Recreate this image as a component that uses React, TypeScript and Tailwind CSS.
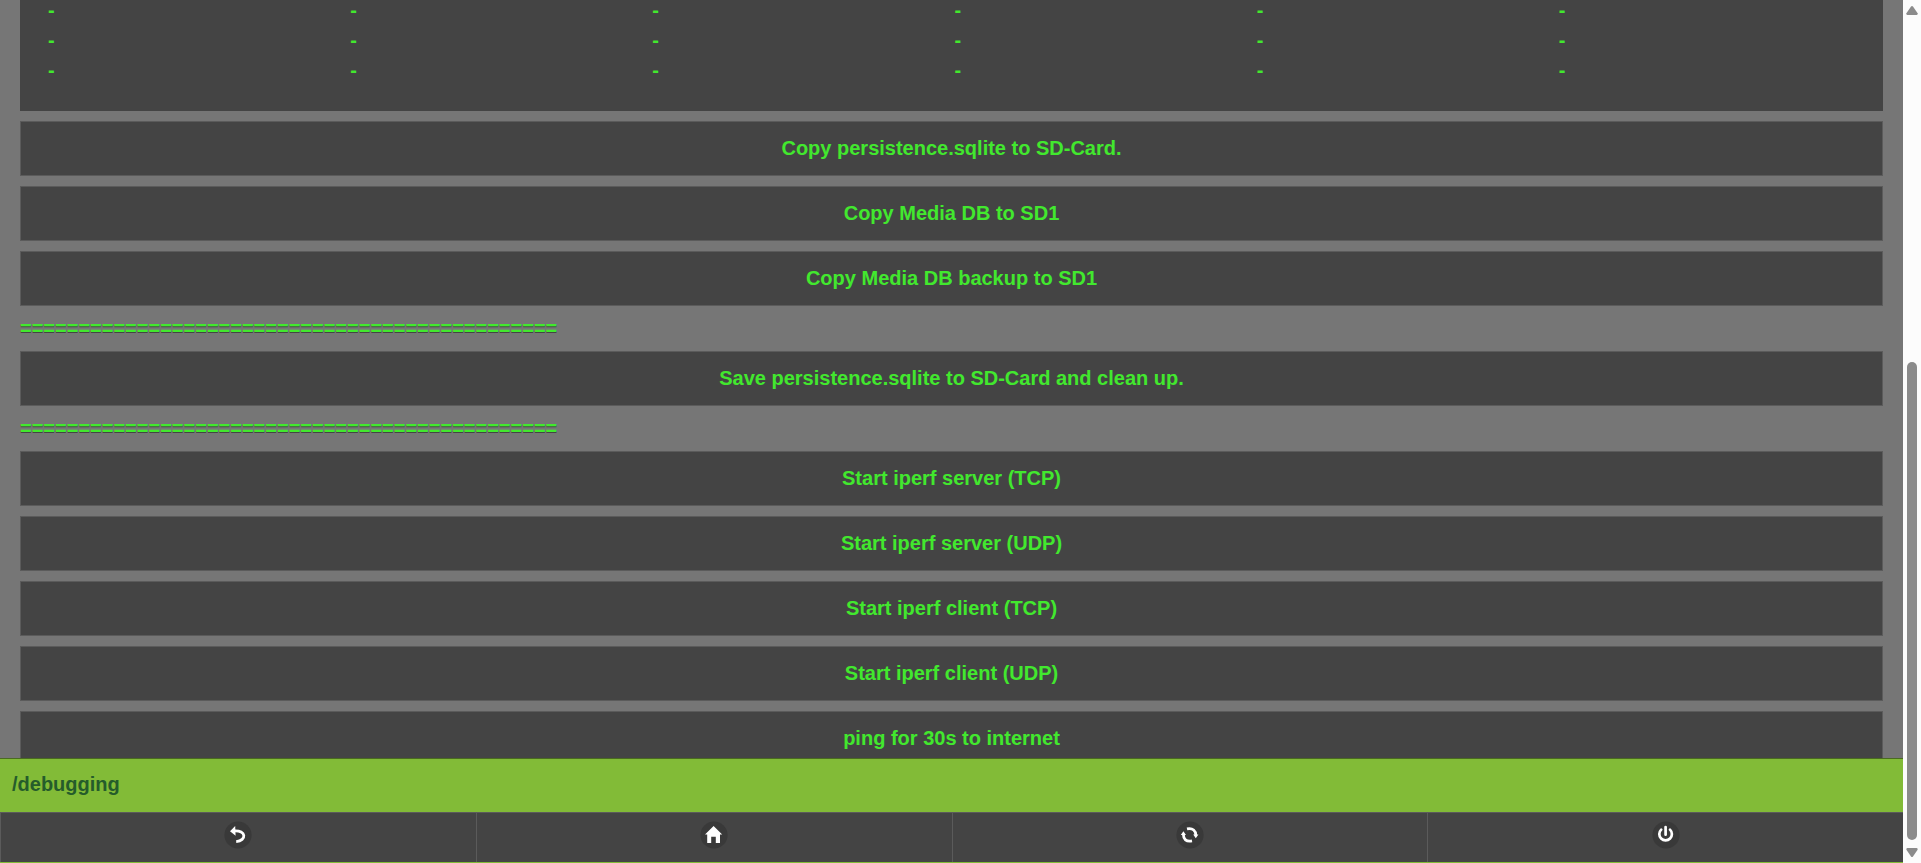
import type { ReactNode } from "react";

const deviceRows = [
  ["-", "-", "-", "-", "-", "-"],
  ["-", "-", "-", "-", "-", "-"],
  ["-", "-", "-", "-", "-", "-"],
];

const copyActions = [
  "Copy persistence.sqlite to SD-Card.",
  "Copy Media DB to SD1",
  "Copy Media DB backup to SD1",
];

const networkActions = [
  "Start iperf server (TCP)",
  "Start iperf server (UDP)",
  "Start iperf client (TCP)",
  "Start iperf client (UDP)",
  "ping for 30s to internet",
];

function ActionButton({ children }: { children: ReactNode }) {
  return (
    <button
      type="button"
      className="mb-[10px] flex h-[55px] w-full shrink-0 items-center justify-center border border-[#5b5b5b] bg-[#444] px-4 pb-[2px] text-center font-bold"
    >
      {children}
    </button>
  );
}

function Divider() {
  return (
    <p className="mb-[10px] h-[25px] shrink-0 overflow-hidden whitespace-nowrap leading-[25px] [text-shadow:0_1px_0_#444]">
      {"=".repeat(46)}
    </p>
  );
}

function NavLink({ label, children }: { label: string; children: ReactNode }) {
  return (
    <a
      href="#"
      aria-label={label}
      className="flex h-[50px] flex-1 justify-center border-t border-l border-[#5b5b5b] bg-[#444] pt-2"
    >
      <svg width="28" height="28" viewBox="0 0 28 28" fill="none" aria-hidden="true">
        <circle cx="14" cy="14" r="13.6" fill="#393939" />
        {children}
      </svg>
    </a>
  );
}

function Scrollbar() {
  return (
    <div className="flex w-[18px] shrink-0 flex-col items-center bg-[#fcfcfc] py-[5px]" aria-hidden="true">
      <svg width="12" height="10" viewBox="0 0 12 10" fill="#8b8b8b">
        <path d="M5 1.6Q6 .4 7 1.6L11.6 8.2Q12 10 10.6 10H1.4Q0 10 .4 8.2Z" />
      </svg>
      <div className="flex w-[10px] flex-1 flex-col pt-[6px] pb-2">
        <div className="flex-[341]" />
        <div className="flex-[479] rounded-full bg-[#8b8b8b]" />
      </div>
      <svg width="12" height="10" viewBox="0 0 12 10" fill="#8b8b8b">
        <path d="M5 8.4Q6 9.6 7 8.4L11.6 1.8Q12 0 10.6 0H1.4Q0 0 .4 1.8Z" />
      </svg>
    </div>
  );
}

export default function App() {
  return (
    <div className="flex h-screen w-full overflow-hidden font-['Liberation_Sans',Arial,sans-serif] text-[20px] leading-[26px] font-bold text-[#42e82e]">
      <div className="flex min-w-0 flex-1 flex-col">
        <main className="flex min-h-0 flex-1 flex-col overflow-hidden bg-[#767676] px-5">
          <section className="mb-[10px] shrink-0 bg-[#444] px-[25px] pb-[26px]">
            <table className="-mt-[5px] w-full table-fixed border-collapse">
              <tbody>
                {deviceRows.map((row, r) => (
                  <tr key={r} className="h-[30px]">
                    {row.map((cell, c) => (
                      <td key={c} className="px-[3px] py-[2px]">
                        {cell}
                      </td>
                    ))}
                  </tr>
                ))}
              </tbody>
            </table>
          </section>
          {copyActions.map((label) => (
            <ActionButton key={label}>{label}</ActionButton>
          ))}
          <Divider />
          <ActionButton>Save persistence.sqlite to SD-Card and clean up.</ActionButton>
          <Divider />
          {networkActions.map((label) => (
            <ActionButton key={label}>{label}</ActionButton>
          ))}
        </main>
        <footer className="shrink-0 border-b border-[#82bb37] bg-[#82bb37]">
          <h1 className="flex h-[54px] items-center border-t border-[#4a6b20] px-3 pb-1 text-[#255c2b]">
            /debugging
          </h1>
          <nav className="flex">
            <NavLink label="Back">
              <path d="M6 10.2 11.2 5 11.6 14.8Z" fill="#fff" />
              <path d="M10 9.9C22.4 9 23 19.6 12.2 20.6" stroke="#fff" strokeWidth="2.8" />
            </NavLink>
            <NavLink label="Home">
              <path
                d="M13.6 5 22.2 13.6H20V22H15.8V15.8H11.2V22H7.2V13.6H5Z"
                fill="#fff"
              />
            </NavLink>
            <NavLink label="Refresh">
              <path d="M11 7.9C17 6.6 19.8 10 19.8 14" stroke="#fff" strokeWidth="2.8" />
              <path d="M16 19.9C10 21 7.4 18 7.4 13.6" stroke="#fff" strokeWidth="2.8" />
              <path d="M17.2 13.6H22.4L19.8 17.2ZM10 14H4.8L7.4 10.2Z" fill="#fff" />
            </NavLink>
            <NavLink label="Power">
              <path
                d="M9.2 8.6a6.3 6.3 0 1 0 8.8 0M13.6 6v7.7"
                stroke="#fff"
                strokeWidth="2.7"
                strokeLinecap="round"
              />
            </NavLink>
          </nav>
        </footer>
      </div>
      <Scrollbar />
    </div>
  );
}
